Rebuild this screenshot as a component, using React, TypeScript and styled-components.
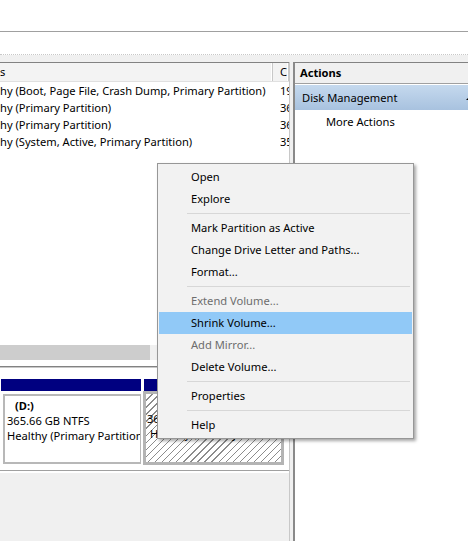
import React from 'react';
import styled, { createGlobalStyle } from 'styled-components';

const GlobalStyle = createGlobalStyle`
  html, body {
    margin: 0;
    padding: 0;
    background: #f0f0f0;
  }
`;

const volumes = [
  { status: 'hy (Boot, Page File, Crash Dump, Primary Partition)', cap: '19' },
  { status: 'hy (Primary Partition)', cap: '36' },
  { status: 'hy (Primary Partition)', cap: '36' },
  { status: 'hy (System, Active, Primary Partition)', cap: '35' },
];

type MenuEntry = { label?: string; disabled?: boolean; active?: boolean; sep?: boolean };

const menu: MenuEntry[] = [
  { label: 'Open' },
  { label: 'Explore' },
  { sep: true },
  { label: 'Mark Partition as Active' },
  { label: 'Change Drive Letter and Paths...' },
  { label: 'Format...' },
  { sep: true },
  { label: 'Extend Volume...', disabled: true },
  { label: 'Shrink Volume...', active: true },
  { label: 'Add Mirror...', disabled: true },
  { label: 'Delete Volume...' },
  { sep: true },
  { label: 'Properties' },
  { sep: true },
  { label: 'Help' },
];

const App = () => {
  return (
    <Window>
      <GlobalStyle />
      <Toolbar />
      <SubBar />
      <Workspace>
        <LeftColumn>
          <ListPane>
            <HeaderRow>
              <HeaderCell $width={273}>s</HeaderCell>
              <HeaderCell $pad={7}>C</HeaderCell>
            </HeaderRow>
            {volumes.map((v, i) => (
              <Row key={i}>
                <Cell $width={280}>{v.status}</Cell>
                <Cell>{v.cap}</Cell>
              </Row>
            ))}
            <Filler />
            <HScroll>
              <Thumb />
            </HScroll>
          </ListPane>
          <DiskPane>
            <Partition $width={140}>
              <NavyBar />
              <PartBox>
                <Label $bold $indent={8}>(D:)</Label>
                <Label>365.66 GB NTFS</Label>
                <Label>Healthy (Primary Partition)</Label>
              </PartBox>
            </Partition>
            <Partition $width={141}>
              <NavyBar />
              <HatchedBox>
                <Label>&nbsp;</Label>
                <Label>365.66 GB NTFS</Label>
                <Label $indent={3}>Healthy (Primary Partition)</Label>
              </HatchedBox>
            </Partition>
          </DiskPane>
          <BottomArea />
        </LeftColumn>
        <Splitter />
        <ActionsPane>
          <ActionsHeader>Actions</ActionsHeader>
          <ActionGroup>
            <span>Disk Management</span>
            <CollapseArrow />
          </ActionGroup>
          <ActionItem>More Actions</ActionItem>
        </ActionsPane>
      </Workspace>

      <ContextMenu>
        {menu.map((m, i) =>
          m.sep ? (
            <Separator key={i} />
          ) : (
            <MenuItem key={i} $disabled={m.disabled} $active={m.active}>
              {m.label}
            </MenuItem>
          ),
        )}
      </ContextMenu>
    </Window>
  );
};

const Window = styled.div`
  position: relative;
  width: 468px;
  height: 541px;
  overflow: hidden;
  display: flex;
  flex-direction: column;
  background: #f0f0f0;
  font-family: 'Noto Sans', 'Open Sans', sans-serif;
  font-size: 11.15px;
  color: #000;
`;

const Toolbar = styled.div`
  flex: none;
  height: 31px;
  background: #fff;
  border-bottom: 1px solid #a0a0a0;
`;

const SubBar = styled.div`
  flex: none;
  height: 22px;
  background: #fff;
  border-bottom: 1px dotted #c8c8c8;
`;

const Workspace = styled.div`
  flex: 1;
  display: flex;
  padding-top: 7px;
  min-height: 0;
`;

const LeftColumn = styled.div`
  width: 289px;
  flex: none;
  display: flex;
  flex-direction: column;
  border-right: 1px solid #c8c8c8;
`;

const ListPane = styled.div`
  height: 297px;
  flex: none;
  display: flex;
  flex-direction: column;
  background: #fff;
  border-top: 1px solid #828282;
  border-bottom: 1px solid #828282;
  padding-bottom: 6px;
  overflow: hidden;
`;

const HeaderRow = styled.div`
  display: flex;
  height: 18px;
  background: #f3f3f3;
  border-bottom: 1px solid #e0e0e0;
  flex: none;
`;

const HeaderCell = styled.div<{ $width?: number; $pad?: number }>`
  ${(p) => (p.$width ? `width: ${p.$width}px; flex: none;` : 'flex: 1;')}
  padding-left: ${(p) => p.$pad ?? 0}px;
  line-height: 18px;
  white-space: nowrap;
  overflow: hidden;
  box-sizing: border-box;
  border-right: 1px solid #c8c8c8;
  box-shadow: inset -1px 0 0 #fff;
`;

const Row = styled.div`
  display: flex;
  height: 17px;
  line-height: 17px;
  flex: none;
`;

const Cell = styled.div<{ $width?: number }>`
  ${(p) => (p.$width ? `width: ${p.$width}px; flex: none;` : 'flex: 1;')}
  white-space: nowrap;
  overflow: hidden;
`;

const Filler = styled.div`
  flex: 1;
`;

const HScroll = styled.div`
  flex: none;
  height: 15px;
  background: #f0f0f0;
  display: flex;
`;

const Thumb = styled.div`
  width: 150px;
  background: #cdcdcd;
`;

const DiskPane = styled.div`
  flex: none;
  height: 91px;
  display: flex;
  gap: 3px;
  padding: 11px 0 0 1px;
  background: #fff;
  border-top: 1px solid #c8c8c8;
  border-bottom: 1px solid #a0a0a0;
`;

const Partition = styled.div<{ $width: number }>`
  width: ${(p) => p.$width}px;
  display: flex;
  flex-direction: column;
`;

const NavyBar = styled.div`
  height: 12px;
  background: #000080;
  flex: none;
`;

const PartBox = styled.div`
  margin: 3px 0 0 2px;
  height: 64px;
  border: 2px solid #b8b8b8;
  border-right-width: 1px;
  padding: 2px 0 0 2px;
  background: #fff;
  overflow: hidden;
`;

const HatchedBox = styled.div`
  margin: 0 1px 0 -1px;
  height: 66px;
  border: 3px solid #b4b4b4;
  padding: 2px 0 0 1px;
  overflow: hidden;
  background: repeating-linear-gradient(135deg, #fff 0 4px, #8c8c8c 4px 5px);
`;

const Label = styled.div<{ $bold?: boolean; $indent?: number }>`
  font-weight: ${(p) => (p.$bold ? 700 : 400)};
  padding-left: ${(p) => p.$indent ?? 0}px;
  line-height: 15px;
  white-space: nowrap;
`;

const BottomArea = styled.div`
  flex: 1;
  border-top: 2px solid #fff;
  background: #f0f0f0;
`;

const Splitter = styled.div`
  width: 3px;
  flex: none;
  background: #f0f0f0;
`;

const ActionsPane = styled.div`
  flex: 1;
  display: flex;
  flex-direction: column;
  background: #fff;
  border-left: 2px solid #8a8a8a;
  border-top: 1px solid #828282;
  overflow: hidden;
`;

const ActionsHeader = styled.div`
  height: 20px;
  line-height: 20px;
  padding-left: 5px;
  font-weight: 700;
  background: #f0f0f0;
  border-bottom: 1px solid #a0a0a0;
`;

const ActionGroup = styled.div`
  height: 25px;
  display: flex;
  align-items: center;
  justify-content: space-between;
  padding-left: 7px;
  margin-top: 1px;
  background: linear-gradient(#c5d9ee, #a8c2df);
`;

const CollapseArrow = styled.span`
  width: 0;
  height: 0;
  margin-right: -6px;
  border-left: 4px solid transparent;
  border-right: 4px solid transparent;
  border-bottom: 4px solid #000;
`;

const ActionItem = styled.div`
  height: 24px;
  line-height: 24px;
  padding-left: 31px;
`;

const ContextMenu = styled.div`
  position: absolute;
  left: 157px;
  top: 163px;
  width: 253px;
  padding: 2px 1px;
  background: #f2f2f2;
  border: 1px solid #979797;
  box-shadow: 2px 2px 3px rgba(0, 0, 0, 0.35);
`;

const MenuItem = styled.div<{ $disabled?: boolean; $active?: boolean }>`
  height: 22px;
  line-height: 22px;
  padding-left: 32px;
  color: ${(p) => (p.$disabled ? '#6d6d6d' : '#000')};
  background: ${(p) => (p.$active ? '#91c9f7' : 'transparent')};
  white-space: nowrap;
`;

const Separator = styled.div`
  height: 1px;
  margin: 3px 2px 3px 28px;
  background: #d7d7d7;
`;

export default App;
